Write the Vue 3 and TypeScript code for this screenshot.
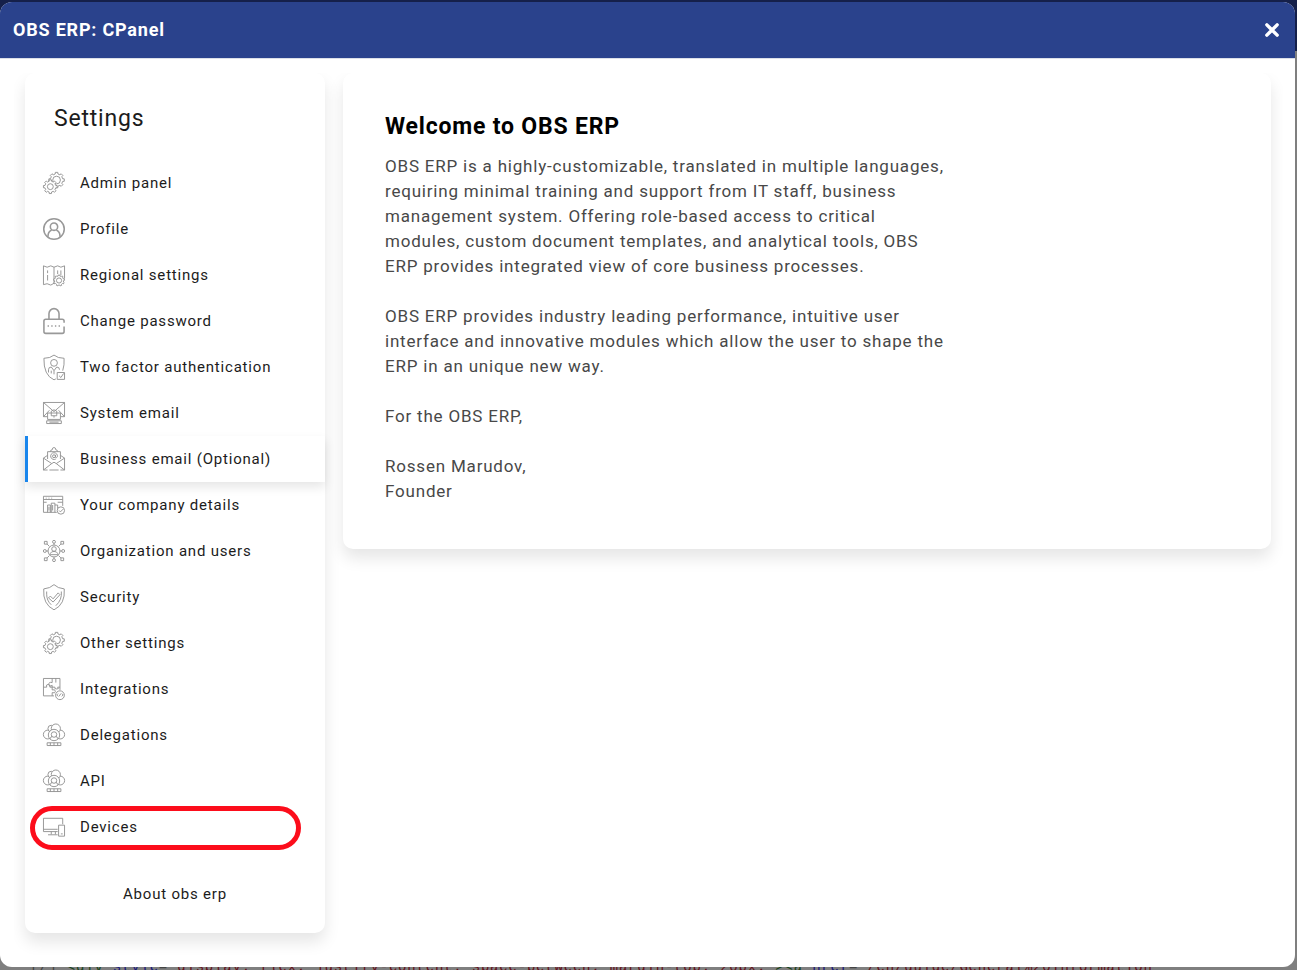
<script setup lang="ts">
import { ref } from 'vue'

interface MenuItem {
  label: string
  icon: string
  marked?: boolean
}

interface Shape {
  d: string
  solid?: boolean
}

const line = (d: string): Shape => ({ d })
const solid = (d: string): Shape => ({ d, solid: true })

const circle = (x: number, y: number, r: number): string =>
  `M${x - r} ${y}a${r} ${r} 0 1 0 ${2 * r} 0a${r} ${r} 0 1 0 ${-2 * r} 0`

const gear = (x: number, y: number, inner: number, outer: number, teeth: number): string => {
  const points: string[] = []
  const step = (Math.PI * 2) / teeth
  for (let i = 0; i < teeth; i++) {
    const a = i * step - Math.PI / 2
    const spots: [number, number][] = [[-0.28, inner], [-0.2, outer], [0.2, outer], [0.28, inner]]
    for (const [t, r] of spots) {
      points.push(`${(x + Math.cos(a + t * step) * r).toFixed(2)} ${(y + Math.sin(a + t * step) * r).toFixed(2)}`)
    }
  }
  return `M${points.join('L')}Z`
}

const icons: Record<string, Shape[]> = {
  gears: [
    line(gear(14.8, 8.8, 6.8, 8.5, 8)),
    line(circle(14.8, 8.8, 4.2)),
    solid(gear(8, 16, 6, 7.6, 8)),
    line(circle(8, 16, 3.2)),
  ],
  profile: [
    line(circle(12, 12, 11.2)),
    line(circle(12, 9.5, 4)),
    line('M5.500 20.500V19Q6 14.500 9.500 13.200M18.500 20.500V19Q18 14.500 14.500 13.200'),
  ],
  map: [
    line('M12 21L8.500 23L4.500 21.500L.5 22.500V2L4.500 3.500L8.500 2L12 3.500L16 2L19.500 3.500L23.500 2V16M12 21V3.500'),
    line('M5 7V10M5 12V18M16 7V11M19.500 7V12'),
    solid(gear(17.5, 18, 5, 6, 9)),
    line(circle(17.5, 18, 2.8)),
  ],
  lock: [
    line('M6.500 10V4A5.500 5.500 0 0 1 17.500 4V10'),
    line('M23 14V12Q23 10 21 10H3Q1 10 1 12V23.500Q1 25.500 3 25.500H21Q23 25.500 23 23.500V18'),
    line('M5 17.500H6.500M9 17.500H10.500M13 17.500H14.500M17 17.500H18.500'),
  ],
  shieldUser: [
    line('M14 25L12 26Q.5 21 1 2.500Q8 2.500 12 -1Q16 2.500 23 2.500Q23.500 10 21.500 16'),
    line(circle(12, 7.5, 3.7)),
    line('M6 18V15Q6 12 9 12L12 16L15 12Q18 12 18 15M9 19V16M12 16V20'),
    solid('M15.500 18H23.500V25.500H15.500Z'),
    line('M17.500 21.500L19.500 23.500L22.500 19'),
  ],
  mail: [
    line('M5 16H.5V.5H23.500V16H19M.5 .5L12 10.500L23.500 .5M.5 16L7 9M23.500 16L17 9'),
    solid('M5 12H19V19H5Z'),
    line('M9 12V10Q12 7 15 10V12M9 12V15H15V12M12 15V17'),
    line('M4 20.500H20V23.500H4ZM7 22H17'),
  ],
  openMail: [
    line('M5 12V4H19V12M8 4Q8 2 10 2Q10 -.5 12 -.5T14 2Q16 2 16 4'),
    line('M5 8L.5 11V24H5M7 24H17M19 24H23.500V11L19 8M.5 11L9.500 17L.5 24M23.500 11L14.500 17L23.500 24M9.500 17Q12 14 14.500 17'),
    line(circle(12, 9, 1.6)),
    line('M14 12A3.700 3.700 0 1 1 15.700 9.500Q14.600 11.500 13.600 10V7.500'),
  ],
  company: [
    line('M15 20H.5V2.500H21.500V13M.5 6H21.500M3 4.500H4M6 4.500H7M9 4.500H10'),
    line('M5 20V12H8V20M9 20V10H13V20M13 12H16V17M10.500 12V18M.5 9H4M16 9H21.500M6.500 14V18'),
    solid(circle(19.500, 18, 4)),
    line('M17.500 18L19 19.500L22 16.500'),
  ],
  organization: [
    line(circle(12, 12, 6.5)),
    line(circle(12, 9.8, 2.5)),
    line('M8 16V14.500Q9 12.500 12 12.500T16 14.500V16M8 16H16M12 5.500V3.500M12 18.500V20.500M5.500 12H3.500M18.500 12H20.500M7 7L4.500 4.500M17 7L19.500 4.500M7 17L4.500 19.500M17 17L19.500 19.500'),
    line(circle(12, 2, 1.6)),
    line(circle(12, 22, 1.6)),
    line(circle(2, 12, 1.6)),
    line(circle(22, 12, 1.6)),
    line('M1.500 1.500H4.500V4.500H1.500ZM19.500 1.500H22.500V4.500H19.500ZM1.500 19.500H4.500V22.500H1.500ZM19.500 19.500H22.500V22.500H19.500Z'),
  ],
  shield: [
    line('M12 -1.500Q16 2.500 23.200 3.200Q24.500 20 12 26Q-.5 20 .8 3.200Q8 2.500 12 -1.500Z'),
    line('M4 6V9Q4 16 9 20.500M20 6Q21 15 14 21.500'),
    line('M6 13L8 11L11 14L16.500 7.500L18.500 9.500L11 17.500Z'),
  ],
  puzzle: [
    line('M12 19.500H.5V.5H18.500V13M10 .5V5Q6 4 6.500 7T10 8V10M.5 10H4Q3 7 5.500 7T7.500 10H13Q12 12 15 12T16 10H18.500M10 10V13Q13.500 12 13.500 14.500T10 16V19.500M14 .5V5'),
    solid(circle(18.500, 18.800, 4.8)),
    line('M16.500 17L15 18.500L16.500 20M20.500 17L22 18.500L20.500 20M19.500 17L17.500 20'),
  ],
  cloudUser: [
    line(circle(5.2, 11.5, 4.8)),
    line(circle(18.8, 11.5, 4.8)),
    solid(circle(9, 5, 3.6)),
    solid(circle(14, 5, 5)),
    solid(circle(12, 12, 6.2)),
    line(circle(12, 11.5, 3)),
    line('M8 16Q8.500 13.500 10 13.500M16 16Q15.500 13.500 14 13.500'),
    solid('M4.500 20.500H19.500V23.500H4.500Z'),
    line('M8 20.500V23.500M12 20.500V23.500M16 20.500V23.500'),
  ],
  devices: [
    line('M16 17H.5V2.500H21.500V9M.5 14.500H16M9 17V20M13.500 17V20M5.500 20.500H16'),
    line('M17 10H23.500V22H17ZM19.500 19.500H21.500'),
  ],
}
const boldIcons = ['lock', 'profile']

const items: MenuItem[] = [
  { label: 'Admin panel', icon: 'gears' },
  { label: 'Profile', icon: 'profile' },
  { label: 'Regional settings', icon: 'map' },
  { label: 'Change password', icon: 'lock' },
  { label: 'Two factor authentication', icon: 'shieldUser' },
  { label: 'System email', icon: 'mail' },
  { label: 'Business email (Optional)', icon: 'openMail' },
  { label: 'Your company details', icon: 'company' },
  { label: 'Organization and users', icon: 'organization' },
  { label: 'Security', icon: 'shield' },
  { label: 'Other settings', icon: 'gears' },
  { label: 'Integrations', icon: 'puzzle' },
  { label: 'Delegations', icon: 'cloudUser' },
  { label: 'API', icon: 'cloudUser' },
  { label: 'Devices', icon: 'devices', marked: true },
]
const active = ref('Business email (Optional)')
const open = ref(true)
</script>

<template>
  <div class="backdrop">
    <code class="source">[/] <span class="tag">&lt;div</span> <span class="attr">style</span>=<span class="value">"display: flex; justify-content: space-between; margin-top: 20px;"</span><span class="tag">&gt;&lt;a</span> <span class="attr">href</span>=<span class="value">"/en/guide/General%20Information"</span></code>
    <div v-if="open" class="dialog" role="dialog" aria-labelledby="dialog-title">
      <header class="bar">
        <h1 id="dialog-title">OBS ERP: CPanel</h1>
        <button class="close" type="button" aria-label="Close" @click="open = false">
          <svg viewBox="0 0 14 14"><path d="M2.500 2.500L11.500 11.500M11.500 2.500L2.500 11.500" /></svg>
        </button>
      </header>
      <div class="body">
        <aside class="card side">
          <h2>Settings</h2>
          <nav>
            <a
              v-for="item in items"
              :key="item.label"
              href="#"
              class="item"
              :class="{ active: item.label === active, marked: item.marked }"
              @click.prevent="active = item.label"
            >
              <svg class="icon" :class="{ bold: boldIcons.includes(item.icon) }" viewBox="0 0 24 24" aria-hidden="true">
                <path v-for="shape in icons[item.icon]" :key="shape.d" :class="{ solid: shape.solid }" :d="shape.d" />
              </svg>
              <span>{{ item.label }}</span>
            </a>
          </nav>
          <a class="about" href="#">About obs erp</a>
        </aside>
        <main class="card welcome">
          <h2>Welcome to OBS ERP</h2>
          <p>OBS ERP is a highly-customizable, translated in multiple languages, requiring minimal training and support from IT staff, business management system. Offering role-based access to critical modules, custom document templates, and analytical tools, OBS ERP provides integrated view of core business processes.</p>
          <p>OBS ERP provides industry leading performance, intuitive user interface and innovative modules which allow the user to shape the ERP in an unique new way.</p>
          <p>For the OBS ERP,</p>
          <p>Rossen Marudov,<br />Founder</p>
        </main>
      </div>
    </div>
  </div>
</template>

<style>
body {
  margin: 0;
}
</style>

<style scoped>
* {
  box-sizing: border-box;
}
.backdrop {
  position: relative;
  display: flex;
  min-height: 100vh;
  padding: 2px 2px 3px 0;
  overflow: hidden;
  background: linear-gradient(#15204a 51px, #7f7f7f 51px);
  font-family: Roboto, "Liberation Sans", sans-serif;
  letter-spacing: 0.05rem;
}
.source {
  position: absolute;
  left: 30px;
  bottom: -6px;
  font: 14px/18px "Liberation Mono", monospace;
  white-space: pre;
  color: #444;
}
.tag { color: #17431a; }
.attr { color: #15157a; }
.value { color: #651018; }
.dialog {
  position: relative;
  flex: 1;
  min-width: 0;
  background: #fff;
  border-radius: 12px;
  overflow: hidden;
}
.bar {
  display: flex;
  align-items: center;
  justify-content: space-between;
  height: 57px;
  padding: 0 15px 1px 13px;
  background: #2a428c;
  border-bottom: 1px solid #dcdfe8;
  color: #fff;
}
.bar h1 {
  margin: 0;
  font-size: 18px;
  font-weight: 700;
  line-height: 24px;
}
.close {
  display: flex;
  padding: 0;
  border: 0;
  background: none;
  cursor: pointer;
}
.close svg {
  width: 16px;
  height: 16px;
  stroke: #fff;
  stroke-width: 3;
  stroke-linecap: round;
}
.body {
  display: flex;
  align-items: flex-start;
  gap: 18px;
  margin: 14px 12px 12px 14px;
  padding: 0 12px 22px 11px;
  overflow: hidden;
}
.card {
  background: #fff;
  border-radius: 10px;
  box-shadow: 0 9px 16px rgba(0, 0, 0, 0.1);
}
.side {
  flex: 0 0 300px;
  padding: 31px 0 16px;
}
.side h2 {
  margin: 0 0 26px 29px;
  font-size: 23px;
  font-weight: 400;
  line-height: 30px;
  color: #1c1c1c;
}
.item {
  position: relative;
  display: flex;
  align-items: center;
  gap: 15px;
  height: 46px;
  padding-left: 15px;
  border-left: 3px solid transparent;
  color: #1c1c1c;
  font-size: 15px;
  line-height: 20px;
  text-decoration: none;
}
.active {
  border-left-color: #1a86ec;
  background: #fff;
  box-shadow: 0 5px 10px rgba(0, 0, 0, 0.1);
}
.marked::after {
  content: "";
  position: absolute;
  inset: 2px 24px 0 2px;
  border: 5px solid #fc0d1b;
  border-radius: 22px;
}
.icon {
  width: 22px;
  height: 22px;
  overflow: visible;
  fill: none;
  stroke: #8f8f8f;
  stroke-width: 1;
  stroke-linejoin: round;
}
.icon.bold {
  stroke: #999;
  stroke-width: 1.7;
}
.icon .solid {
  fill: #fff;
}
.about {
  display: block;
  margin-top: 21px;
  color: #1c1c1c;
  font-size: 15px;
  line-height: 46px;
  text-align: center;
  text-decoration: none;
}
.welcome {
  flex: 1;
  min-width: 0;
  padding: 39px 42px 45px;
}
.welcome h2 {
  margin: 0 0 12px;
  font-size: 23px;
  font-weight: 700;
  line-height: 30px;
  color: #000;
}
.welcome p {
  max-width: 564px;
  margin: 0;
  color: #484848;
  font-size: 17px;
  line-height: 25px;
}
.welcome p + p {
  margin-top: 25px;
}
</style>
